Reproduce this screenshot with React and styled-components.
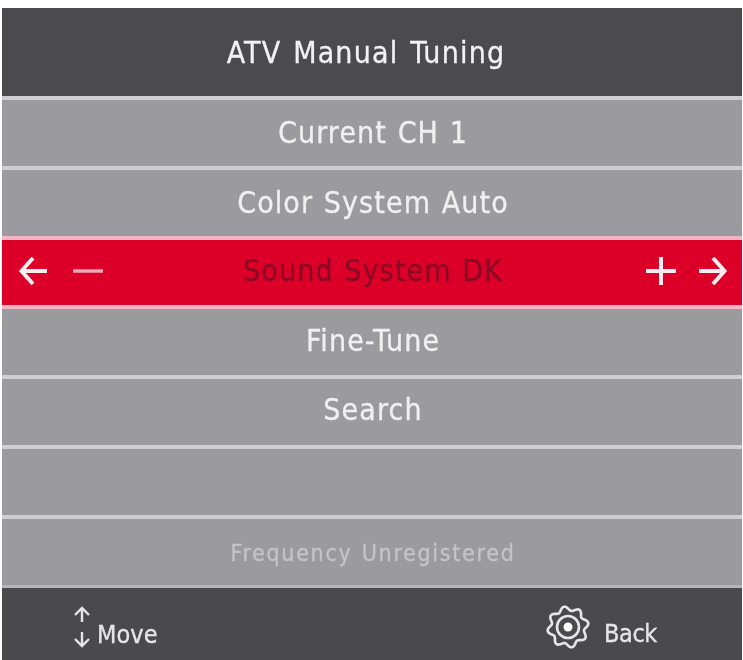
import React from "react";
import styled, { createGlobalStyle } from "styled-components";

const GlobalStyle = createGlobalStyle`
  html, body {
    margin: 0;
    background: #ffffff;
  }
`;

const Page = styled.div`
  width: 743px;
  height: 660px;
  box-sizing: border-box;
  padding: 8px 1px 0 2px;
  overflow: hidden;
`;

const Menu = styled.div`
  display: flex;
  flex-direction: column;
  height: 652px;
  font-family: "DejaVu Sans Condensed", "DejaVu Sans", sans-serif;
`;

const Header = styled.div`
  display: flex;
  align-items: center;
  justify-content: center;
  height: 88px;
  padding-right: 12px;
  background: #4b4a4c;
  color: #f2f2f2;
  font-size: 30px;
  letter-spacing: 1.2px;
  word-spacing: 2px;
  -webkit-text-stroke: 0.3px #f2f2f2;
  filter: blur(0.6px);
`;

const Row = styled.div`
  display: flex;
  align-items: center;
  justify-content: space-between;
  box-sizing: border-box;
  height: 69.8px;
  padding: 0 14px 0 16px;
  padding-bottom: ${(p) => p.$lift || 0}px;
  padding-top: ${(p) => p.$drop || 0}px;
  border-top: 4px solid ${(p) => (p.$pink ? "#f3b5c2" : "#cfcfd2")};
  background: ${(p) => (p.$active ? "#dc0029" : "#9a9a9f")};
`;

const RowLabel = styled.span`
  flex: 1;
  text-align: center;
  font-size: ${(p) => (p.$small ? "23px" : "30px")};
  letter-spacing: ${(p) => (p.$small ? "1.7px" : "1.1px")};
  word-spacing: 1px;
  color: ${(p) => (p.$active ? "#8a0a25" : p.$small ? "#c4c4c8" : "#f0f0f0")};
  -webkit-text-stroke: 0.3px currentColor;
  filter: blur(0.6px);
`;

const Controls = styled.div`
  display: flex;
  align-items: center;
  gap: ${(p) => p.$gap}px;
  width: 100px;
  justify-content: ${(p) => (p.$end ? "flex-end" : "flex-start")};
  filter: blur(0.5px);
`;

const Footer = styled.div`
  flex: 1;
  display: flex;
  align-items: center;
  justify-content: space-between;
  padding: 6px 85px 0 71px;
  border-top: 3px solid #b5b5b8;
  background: #4a494c;
  color: #e6e6e6;
  font-size: 25px;
  letter-spacing: 0.3px;
`;

const Hint = styled.div`
  display: flex;
  align-items: ${(p) => (p.$gear ? "center" : "flex-end")};
  gap: ${(p) => (p.$gear ? "14px" : "6px")};
  filter: blur(0.6px);
`;

const HintLabel = styled.span`
  position: relative;
  top: ${(p) => (p.$gear ? "7px" : "1px")};
  letter-spacing: ${(p) => (p.$gear ? "-0.4px" : "0.1px")};
  -webkit-text-stroke: 0.3px currentColor;
`;

const gearPath = () => {
  const points = [];
  for (let i = 0; i < 96; i++) {
    const a = (i / 96) * Math.PI * 2;
    const r = 18.5 + 2.2 * Math.cos(a * 8 + Math.PI / 2);
    points.push(`${(22 + r * Math.cos(a)).toFixed(2)},${(22 + r * Math.sin(a)).toFixed(2)}`);
  }
  return `M${points.join("L")}Z`;
};

const ArrowLeft = () => (
  <svg width="30" height="32" viewBox="0 0 30 32" fill="none" stroke="#fbeef0" strokeWidth="4">
    <path d="M29 16H4M15 3 3.5 16 15 29" />
  </svg>
);

const ArrowRight = () => (
  <svg width="30" height="32" viewBox="0 0 30 32" fill="none" stroke="#fbeef0" strokeWidth="4">
    <path d="M1 16H26M15 3 26.5 16 15 29" />
  </svg>
);

const Minus = () => (
  <svg width="30" height="6" viewBox="0 0 30 6" fill="none" stroke="#f7a9b6" strokeWidth="3.5">
    <path d="M0 3H30" />
  </svg>
);

const Plus = () => (
  <svg width="30" height="28" viewBox="0 0 30 28" fill="none" stroke="#fbeef0" strokeWidth="4">
    <path d="M0 14H30M15 0V28" />
  </svg>
);

const MoveIcon = () => (
  <svg width="18" height="42" viewBox="0 0 18 42" fill="none" stroke="#e6e6e6" strokeWidth="2.4">
    <path d="M9 16V2M2 9 9 2 16 9M9 26V40M2 33 9 40 16 33" />
  </svg>
);

const GearIcon = () => (
  <svg width="44" height="44" viewBox="0 0 44 44" fill="none" stroke="#e6e6e6" strokeWidth="2.6">
    <path d={gearPath()} />
    <circle cx="22" cy="22" r="11" />
    <circle cx="22" cy="22" r="4.5" fill="#ffffff" stroke="none" />
  </svg>
);

export default function App() {
  return (
    <Page>
      <GlobalStyle />
      <Menu>
        <Header>ATV Manual Tuning</Header>
        <Row>
          <RowLabel>Current CH 1</RowLabel>
        </Row>
        <Row>
          <RowLabel>Color System Auto</RowLabel>
        </Row>
        <Row $active $pink $lift={3}>
          <Controls $gap={25}>
            <ArrowLeft />
            <Minus />
          </Controls>
          <RowLabel $active>Sound System DK</RowLabel>
          <Controls $gap={22} $end>
            <Plus />
            <ArrowRight />
          </Controls>
        </Row>
        <Row $pink $lift={3}>
          <RowLabel>Fine-Tune</RowLabel>
        </Row>
        <Row $lift={5}>
          <RowLabel>Search</RowLabel>
        </Row>
        <Row />
        <Row $drop={3}>
          <RowLabel $small>Frequency Unregistered</RowLabel>
        </Row>
        <Footer>
          <Hint>
            <MoveIcon />
            <HintLabel>Move</HintLabel>
          </Hint>
          <Hint $gear>
            <GearIcon />
            <HintLabel $gear>Back</HintLabel>
          </Hint>
        </Footer>
      </Menu>
    </Page>
  );
}
